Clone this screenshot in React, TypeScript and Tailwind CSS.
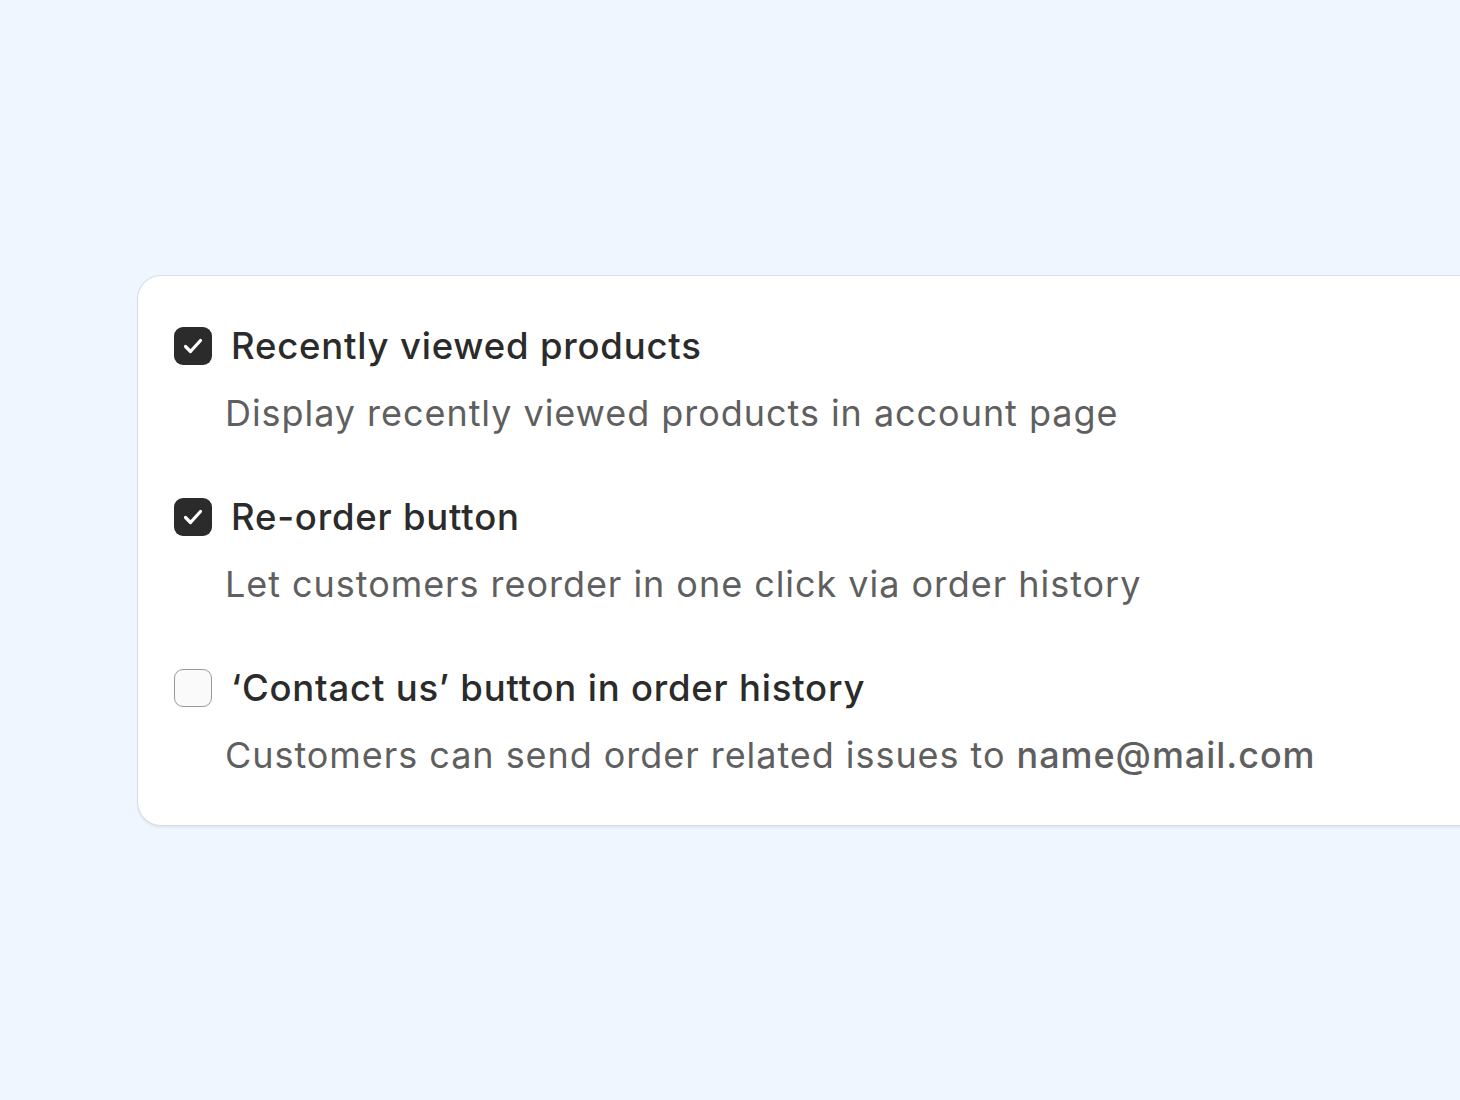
import type { ReactNode } from "react";

type Option = {
  id: string;
  title: string;
  description: ReactNode;
  checked: boolean;
};

const options: Option[] = [
  {
    id: "recent",
    title: "Recently viewed products",
    description: "Display recently viewed products in account page",
    checked: true,
  },
  {
    id: "reorder",
    title: "Re-order button",
    description: "Let customers reorder in one click via order history",
    checked: true,
  },
  {
    id: "contact",
    title: "\u2018Contact us\u2019 button in order history",
    description: (
      <>
        Customers can send order related issues to{" "}
        <span className="font-medium">name@mail.com</span>
      </>
    ),
    checked: false,
  },
];

function Checkbox({ checked }: { checked: boolean }) {
  if (!checked) {
    return (
      <span className="block h-[38px] w-[38px] shrink-0 rounded-[9px] border-[1.5px] border-[#9a9a9a] bg-[#fafafa]" />
    );
  }

  return (
    <span className="flex h-[38px] w-[38px] shrink-0 items-center justify-center rounded-[9px] bg-[#2b2b2b]">
      <svg width="24" height="24" viewBox="0 0 24 24" fill="none">
        <path
          d="M4.5 12.5l5 5L19.5 6.5"
          stroke="white"
          strokeWidth="3.2"
          strokeLinecap="round"
          strokeLinejoin="round"
        />
      </svg>
    </span>
  );
}

export default function App() {
  return (
    <main className="min-h-[1100px] overflow-hidden bg-[#eff6ff] pt-[275px] pl-[137px] font-['Inter',sans-serif]">
      <section className="flex h-[551px] w-[1400px] flex-col gap-[60px] rounded-l-[24px] border border-r-0 border-[#d9dce3] bg-white pt-[48px] pl-[36px] shadow-[0_2px_2px_rgba(0,0,0,0.06)]">
        {options.map((option) => (
          <div key={option.id} className="flex flex-col gap-[23px]">
            <label className="flex h-[44px] items-center gap-[19px]">
              <Checkbox checked={option.checked} />
              <span className="text-[36.5px] leading-[44px] font-medium tracking-[0.8px] text-[#2b2b2b]">
                {option.title}
              </span>
            </label>
            <p className="pl-[51px] text-[36px] leading-[44px] tracking-[0.95px] text-[#5f5f5f]">
              {option.description}
            </p>
          </div>
        ))}
      </section>
    </main>
  );
}
